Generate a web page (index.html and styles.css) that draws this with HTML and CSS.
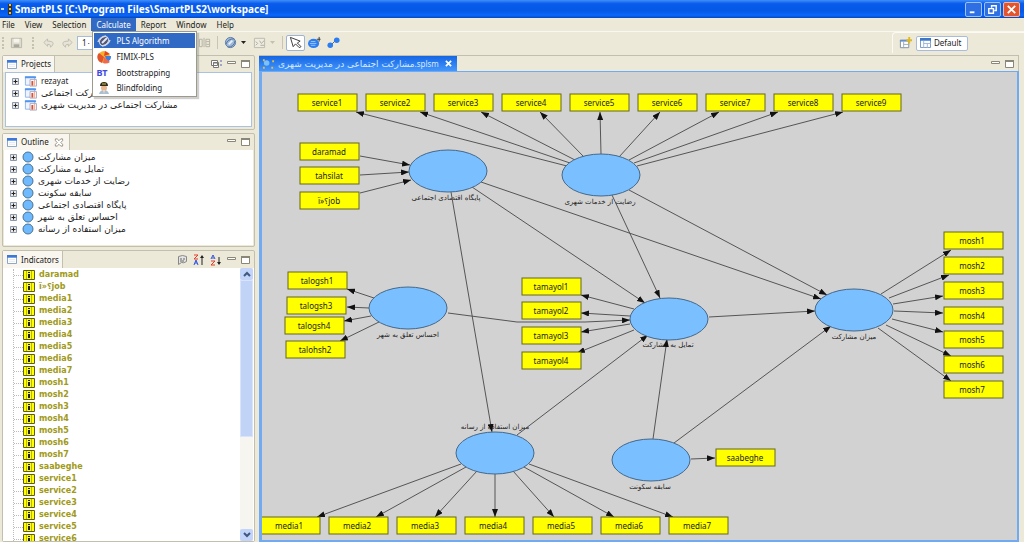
FILE: index.html
```
<!DOCTYPE html>
<html lang="en">
<head>
<meta charset="utf-8">
<title>SmartPLS</title>
<link rel="stylesheet" href="styles.css">
</head>
<body>
<svg class="defs" aria-hidden="true">
  <defs>
    <symbol id="window" viewBox="0 0 11 10"><path d="M.5.5h10v9H.5z" fill="#fff" stroke="#7d9bc4"/><path d="M0 0h11v3H0z" fill="#3c78d8"/><path d="M2 5h7M2 7h7" stroke="#e4e8f0"/></symbol>
    <symbol id="min" viewBox="0 0 9 8"><path d="M.5 1.5h8v2h-8z" fill="#fff" stroke="#8a8778"/></symbol>
    <symbol id="max" viewBox="0 0 9 8"><path d="M.5.5h8v7h-8z" fill="#fff" stroke="#8a8778"/><path d="M0 1h9" stroke="#8a8778" stroke-width="2"/></symbol>
    <symbol id="plus" viewBox="0 0 7 7"><path d="M.5.5h6v6h-6z" fill="#e8e8e8" stroke="#8c98ac"/><path d="M1.500 3.500h4M3.500 1.500v4" stroke="#222"/></symbol>
    <symbol id="project" viewBox="0 0 14 12"><path d="M1.500 1.500h10v9h-10z" fill="#eef4ff" stroke="#8fb2e4"/><path d="M1 1h12v2H1z" fill="#4f94ee"/><path d="M6.500 4.500h7v7h-7z" fill="#fff" stroke="#a8a8c0"/><path d="M8 6h2v5H8z" fill="#e05030"/><path d="M11 5h1v6h-1z" fill="#f0a080"/></symbol>
    <symbol id="latent" viewBox="0 0 12 12"><circle cx="6" cy="6" r="5" fill="#6fb9ff" stroke="#4a7290"/></symbol>
    <symbol id="indicator" viewBox="0 0 12 10"><path d="M.5.5h11v9H.5z" fill="#ff0" stroke="#5c5c20"/><path d="M3.500 1v8M8.500 1v8" stroke="#b8b810"/><path d="M5 2h2v1H5zM5 4h2v4H5z" fill="#222"/></symbol>
  </defs>
</svg>

<header class="titlebar">
  <svg class="logo" viewBox="0 0 12 12"><path d="M0 6h3" stroke="#bcd8ff" stroke-width="2"/><path d="M7 1h4v11H7z" fill="#333"/><path d="M8 1h2v2H8zM8 5h2v2H8zM8 9h2v2H8z" fill="#f4c63a"/></svg>
  <h1>SmartPLS [C:\Program Files\SmartPLS2\workspace]</h1>
  <div class="caption-buttons">
    <button aria-label="Minimize"><svg viewBox="0 0 16 14"><path d="M4 10h5" stroke="#fff" stroke-width="2"/></svg></button>
    <button aria-label="Restore"><svg viewBox="0 0 16 14"><path d="M7 5V3h5v5h-2M4 6h5v5H4z" fill="none" stroke="#fff" stroke-width="1.500"/></svg></button>
    <button class="close" aria-label="Close"><svg viewBox="0 0 16 14"><path d="M4 3l8 8M12 3l-8 8" stroke="#fff" stroke-width="2"/></svg></button>
  </div>
</header>

<nav class="menubar">
  <button>File</button>
  <button>View</button>
  <button>Selection</button>
  <div class="menu-root">
    <button class="open" aria-expanded="true">Calculate</button>
    <div class="dropdown">
      <button class="active"><svg viewBox="0 0 16 14"><ellipse cx="8" cy="7" rx="4" ry="5" transform="rotate(40 8 7)" fill="#557" stroke="#d8e4f4"/><path d="M2 8q2-5 8-6M6 12q6-1 8-6" fill="none" stroke="#cfd8e0" stroke-width="1.500"/><path d="M6 9l5-5" stroke="#dfe8f2" stroke-width="2"/></svg>PLS Algorithm</button>
      <button><svg viewBox="0 0 16 14"><circle cx="8" cy="7" r="6" fill="#f6b02c"/><path d="M8 7L3 3a6 6 0 0 0 3 10z" fill="#e0542c"/><path d="M9 6h6a6 6 0 0 1-4 6z" fill="#3a80e0"/><path d="M8 6l1-5 5 3z" fill="#e34326"/><path d="M8 7l6 5a7 7 0 0 1-7 1z" fill="#ef6a4a"/></svg>FIMIX-PLS</button>
      <button><span class="bt" aria-hidden="true">BT</span>Bootstrapping</button>
      <button><svg viewBox="0 0 16 14"><path d="M3 13q1-4 5-4t5 4z" fill="#a9bfd4"/><circle cx="8" cy="7" r="3" fill="#e8b890"/><path d="M4 5q0-4 4-4t4 4z" fill="#2c2c20"/><path d="M6 3h4" stroke="#e0c030"/><path d="M7 9l1 4 1-4z" fill="#f4d8c8"/></svg>Blindfolding</button>
    </div>
  </div>
  <button>Report</button>
  <button>Window</button>
  <button>Help</button>
</nav>

<div class="toolbar">
  <div class="tools">
    <i class="grip"></i>
    <button class="tool" aria-label="Save"><svg viewBox="0 0 14 14"><path d="M1.500 2.500h11v10h-11z" fill="#dedbcf" stroke="#b8b5a8"/><path d="M4 3h6v4H4z" fill="#f6f4ec"/><path d="M4 9h6v3H4z" fill="#aaa79c"/></svg></button>
    <i class="grip"></i>
    <button class="tool" aria-label="Undo"><svg viewBox="0 0 14 14"><path d="M2 7l4-4v2.500q6 0 6 2.500t-3 4q1-3-3-3v2z" fill="#e6e3d8" stroke="#bfbcae"/></svg></button>
    <button class="tool" aria-label="Redo"><svg viewBox="0 0 14 14"><path d="M12 7L8 3v2.500q-6 0-6 2.500t3 4q-1-3 3-3v2z" fill="#e6e3d8" stroke="#bfbcae"/></svg></button>
    <input class="zoom" type="text" aria-label="Zoom" value="1۰">
    <button class="tool" aria-label="Columns"><svg viewBox="0 0 14 14"><path d="M1.500 3.500h3v8h-3zM8.500 3.500h4v8h-4zM6.500 2v10M9 6h3M9 9h3" fill="none" stroke="#b3b0a2"/></svg></button>
    <i class="rule"></i>
    <button class="tool" aria-label="Calculate"><svg viewBox="0 0 14 14"><circle cx="7" cy="7" r="5.500" fill="#9db8d8" stroke="#5a7ca8"/><path d="M2 9q2-6 9-6M4 12q7 0 8-7" fill="none" stroke="#4f6e98"/><path d="M5 9l4-4" stroke="#e8f0fa" stroke-width="2"/></svg></button>
    <button class="arrow" aria-label="Calculate options"><svg viewBox="0 0 6 4"><path d="M1 0h5L3.500 3z" fill="#222"/></svg></button>
    <button class="tool" aria-label="Report"><svg viewBox="0 0 14 14"><path d="M1.500 2.500h11v10h-11z" fill="#eeebe0" stroke="#bbb8ac"/><path d="M3 6l2 2-2 2M7 5l2 3 3-3M8 10h4" fill="none" stroke="#aaa79a"/></svg></button>
    <button class="arrow" aria-label="Report options"><svg viewBox="0 0 6 4"><path d="M1 0h5L3.500 3z" fill="#c4c1b4"/></svg></button>
    <i class="rule"></i>
    <button class="tool pressed" aria-label="Select"><svg viewBox="0 0 14 14"><path d="M1.500 1.500l3 10 2.500-3 4 4 2-1-4-4 3-2z" fill="#fff" stroke="#333"/></svg></button>
    <button class="tool" aria-label="Latent variable"><svg viewBox="0 0 14 14"><ellipse cx="6" cy="8" rx="6" ry="5" fill="#2c7df0"/><path d="M3 6h5M2 8h7M3 10h5" stroke="#9cc8ff"/><path d="M12 1v5M9.500 3.500h4" stroke="#333"/></svg></button>
    <button class="tool" aria-label="Connection"><svg viewBox="0 0 14 14"><path d="M4 10l6-6" stroke="#555"/><circle cx="3.500" cy="10" r="3" fill="#2c7df0"/><circle cx="10.500" cy="4.500" r="3" fill="#2c7df0"/></svg></button>
  </div>
  <div class="perspectives">
    <button class="tool" aria-label="Open perspective"><svg viewBox="0 0 14 14"><path d="M1.500 3.500h9v8h-9z" fill="#fff" stroke="#7c8ba0"/><path d="M1 3h10v2H1z" fill="#6790c8"/><path d="M5 5v7M5 8h6" stroke="#9ab"/><path d="M11 0v7M8 3.500h6" stroke="#e0b820" stroke-width="2"/></svg></button>
    <button class="perspective"><svg viewBox="0 0 12 11"><path d="M.5.5h11v10H.5z" fill="#fff" stroke="#6e94c4"/><path d="M0 0h12v3H0z" fill="#3c78c8"/><path d="M4 3v8M4 6h8M8 6v5" stroke="#9ab4d4"/></svg>Default</button>
  </div>
</div>

<main class="workbench">
  <aside class="sidebar">
    <section class="view">
      <header class="view-head">
        <h2 class="tab"><svg><use href="#window"/></svg>Projects</h2>
        <div class="view-tools">
          <button aria-label="Collapse all"><svg viewBox="0 0 12 12"><path d="M1.500 2.500h6v5h-6zM3.500 4.500h5v5h-5zM3 5h4" fill="#fff" stroke="#777"/><path d="M11 2v8" stroke="#4a68b0" stroke-dasharray="2"/></svg></button>
          <button aria-label="Minimize"><svg class="box"><use href="#min"/></svg></button>
          <button aria-label="Maximize"><svg class="box"><use href="#max"/></svg></button>
        </div>
      </header>
      <ul class="tree projects">
        <li><svg class="plus"><use href="#plus"/></svg><svg class="project"><use href="#project"/></svg>rezayat</li>
        <li><svg class="plus"><use href="#plus"/></svg><svg class="project"><use href="#project"/></svg><bdi lang="fa">مشارکت اجتماعی</bdi></li>
        <li><svg class="plus"><use href="#plus"/></svg><svg class="project"><use href="#project"/></svg><bdi lang="fa">مشارکت اجتماعی در مدیریت شهری</bdi></li>
      </ul>
    </section>

    <section class="view">
      <header class="view-head">
        <h2 class="tab"><svg><use href="#window"/></svg>Outline<svg class="tab-close" viewBox="0 0 10 10"><path d="M1 1h2l2 2 2-2h2v2L7 5l2 2v2H7L5 7 3 9H1V7l2-2-2-2z" fill="#fff" stroke="#8f8c7e"/></svg></h2>
        <div class="view-tools">
          <button aria-label="Minimize"><svg class="box"><use href="#min"/></svg></button>
          <button aria-label="Maximize"><svg class="box"><use href="#max"/></svg></button>
        </div>
      </header>
      <ul class="tree outline">
        <li><svg class="plus"><use href="#plus"/></svg><svg class="latent"><use href="#latent"/></svg><bdi lang="fa">میزان مشارکت</bdi></li>
        <li><svg class="plus"><use href="#plus"/></svg><svg class="latent"><use href="#latent"/></svg><bdi lang="fa">تمایل به مشارکت</bdi></li>
        <li><svg class="plus"><use href="#plus"/></svg><svg class="latent"><use href="#latent"/></svg><bdi lang="fa">رضایت از خدمات شهری</bdi></li>
        <li><svg class="plus"><use href="#plus"/></svg><svg class="latent"><use href="#latent"/></svg><bdi lang="fa">سابقه سکونت</bdi></li>
        <li><svg class="plus"><use href="#plus"/></svg><svg class="latent"><use href="#latent"/></svg><bdi lang="fa">پایگاه اقتصادی اجتماعی</bdi></li>
        <li><svg class="plus"><use href="#plus"/></svg><svg class="latent"><use href="#latent"/></svg><bdi lang="fa">احساس تعلق به شهر</bdi></li>
        <li><svg class="plus"><use href="#plus"/></svg><svg class="latent"><use href="#latent"/></svg><bdi lang="fa">میزان استفاده از رسانه</bdi></li>
      </ul>
    </section>

    <section class="view">
      <header class="view-head tall">
        <h2 class="tab"><svg><use href="#window"/></svg>Indicators</h2>
        <div class="view-tools">
          <button aria-label="Show values"><svg viewBox="0 0 12 12"><path d="M2.500 2.500q4-2 8 0v5q-3 2-5 1l-3 2z" fill="#e4e4e4" stroke="#888"/><path d="M4 5h2M7 5h2M4 7h4" stroke="#666"/></svg></button>
          <button aria-label="Sort descending"><svg viewBox="0 0 12 12"><path d="M1 1h4L1 5h4" fill="none" stroke="#e43c28"/><path d="M1 11l2-5 2 5M2 9h2" fill="none" stroke="#2c50e0"/><path d="M9 11V3" stroke="#222"/><path d="M7 4l2-3 2 3z" fill="#222"/></svg></button>
          <button aria-label="Sort ascending"><svg viewBox="0 0 12 12"><path d="M1 5l2-4 2 4M2 4h2" fill="none" stroke="#2c50e0"/><path d="M1 7h4l-4 4h4" fill="none" stroke="#e43c28"/><path d="M9 3v7" stroke="#222"/><path d="M7 8l2 3 2-3z" fill="#222"/></svg></button>
          <button aria-label="Minimize"><svg class="box"><use href="#min"/></svg></button>
          <button aria-label="Maximize"><svg class="box"><use href="#max"/></svg></button>
        </div>
      </header>
      <div class="scroller">
        <ul class="tree indicators">
          <li><svg class="indicator"><use href="#indicator"/></svg>daramad</li>
          <li><svg class="indicator"><use href="#indicator"/></svg>ï»؟job</li>
          <li><svg class="indicator"><use href="#indicator"/></svg>media1</li>
          <li><svg class="indicator"><use href="#indicator"/></svg>media2</li>
          <li><svg class="indicator"><use href="#indicator"/></svg>media3</li>
          <li><svg class="indicator"><use href="#indicator"/></svg>media4</li>
          <li><svg class="indicator"><use href="#indicator"/></svg>media5</li>
          <li><svg class="indicator"><use href="#indicator"/></svg>media6</li>
          <li><svg class="indicator"><use href="#indicator"/></svg>media7</li>
          <li><svg class="indicator"><use href="#indicator"/></svg>mosh1</li>
          <li><svg class="indicator"><use href="#indicator"/></svg>mosh2</li>
          <li><svg class="indicator"><use href="#indicator"/></svg>mosh3</li>
          <li><svg class="indicator"><use href="#indicator"/></svg>mosh4</li>
          <li><svg class="indicator"><use href="#indicator"/></svg>mosh5</li>
          <li><svg class="indicator"><use href="#indicator"/></svg>mosh6</li>
          <li><svg class="indicator"><use href="#indicator"/></svg>mosh7</li>
          <li><svg class="indicator"><use href="#indicator"/></svg>saabeghe</li>
          <li><svg class="indicator"><use href="#indicator"/></svg>service1</li>
          <li><svg class="indicator"><use href="#indicator"/></svg>service2</li>
          <li><svg class="indicator"><use href="#indicator"/></svg>service3</li>
          <li><svg class="indicator"><use href="#indicator"/></svg>service4</li>
          <li><svg class="indicator"><use href="#indicator"/></svg>service5</li>
          <li><svg class="indicator"><use href="#indicator"/></svg>service6</li>
        </ul>
        <div class="scrollbar">
          <button aria-label="Scroll up"><svg viewBox="0 0 8 6"><path d="M1 5l3-3 3 3" fill="none" stroke="#40587c" stroke-width="2"/></svg></button>
          <div class="track"><div class="thumb"></div></div>
          <button aria-label="Scroll down"><svg viewBox="0 0 8 6"><path d="M1 1l3 3 3-3" fill="none" stroke="#40587c" stroke-width="2"/></svg></button>
        </div>
      </div>
    </section>
  </aside>

  <section class="editor">
    <header class="editor-head">
      <h2 class="editor-tab">
        <svg class="file" viewBox="0 0 14 12"><circle cx="5" cy="5" r="3" fill="#7cc0ff"/><path d="M1 1h2v2H1zM11 2h2v2h-2zM1 9h2v2H1zM10 9h2v2h-2z" fill="#e0c040"/></svg>
        <span><bdi lang="fa">مشارکت اجتماعی در مدیریت شهری</bdi>.splsm</span>
        <button aria-label="Close"><svg viewBox="0 0 8 8"><path d="M1 1l6 6M7 1L1 7" stroke="#fff" stroke-width="2"/></svg></button>
      </h2>
      <div class="view-tools">
        <button aria-label="Minimize"><svg class="box"><use href="#min"/></svg></button>
        <button aria-label="Maximize"><svg class="box"><use href="#max"/></svg></button>
      </div>
    </header>
    <svg class="canvas" role="img" aria-label="Path model">
      <defs><marker id="tip" viewBox="0 0 8 6" refX="8" refY="3" markerWidth="8" markerHeight="6" markerUnits="userSpaceOnUse" orient="auto"><path d="M0 0l8 3-8 3z" fill="#111"/></marker></defs>
      <g transform="translate(-262 -72)">
        <g class="labels">
          <text x="446" y="200">پایگاه اقتصادی اجتماعی</text>
          <text x="600" y="204">رضایت از خدمات شهری</text>
          <text x="408" y="337">احساس تعلق به شهر</text>
          <text x="668" y="347">تمایل به مشارکت</text>
          <text x="854" y="339">میزان مشارکت</text>
          <text x="495" y="429">میزان استفاده از رسانه</text>
          <text x="650" y="489">سابقه سکونت</text>
        </g>
        <g class="links">
          <path d="M567 166L356 112"/><path d="M570 163L420 112"/><path d="M575 160L481 112"/><path d="M584 157L540 112"/><path d="M601 154L600 112"/><path d="M619 157L660 112"/><path d="M629 160L719 112"/><path d="M634 163L778 112"/><path d="M637 166L843 112"/>
          <path d="M360 156L410 165"/><path d="M360 175L409 172"/><path d="M360 193L411 180"/>
          <path d="M481 182L821 299"/><path d="M472 187L645 303"/><path d="M451 192L492 432"/>
          <path d="M629 190L827 295"/><path d="M612 195L660 298"/>
          <path d="M374 298L347 289"/><path d="M369 308L347 307"/><path d="M371 316L344 321"/><path d="M379 322L340 341"/>
          <path d="M448 313L517 322L585 322L630 320"/>
          <path d="M634 309L581 295"/><path d="M630 316L581 313"/><path d="M630 324L581 332"/><path d="M634 330L577 353"/>
          <path d="M709 317L815 311"/>
          <path d="M881 294L951 250"/><path d="M889 298L949 275"/><path d="M893 304L943 296"/><path d="M894 311L943 313"/><path d="M892 319L943 332"/><path d="M886 325L951 356"/><path d="M878 328L951 381"/>
          <path d="M517 435L648 335"/><path d="M653 439L667 339"/><path d="M674 443L831 326"/><path d="M691 459L715 458"/>
          <path d="M461 464L317 517"/><path d="M466 467L376 517"/><path d="M477 471L435 517"/><path d="M495 474V517"/><path d="M513 471L554 517"/><path d="M524 467L614 517"/><path d="M529 464L673 517"/>
        </g>
        <g class="latents">
          <ellipse cx="448" cy="171" rx="39" ry="21"/><ellipse cx="601" cy="175" rx="39" ry="21"/><ellipse cx="408" cy="308" rx="39" ry="21"/><ellipse cx="669" cy="319" rx="39" ry="21"/><ellipse cx="854" cy="310" rx="39" ry="21"/><ellipse cx="495" cy="453" rx="39" ry="21"/><ellipse cx="651" cy="460" rx="39" ry="21"/>
        </g>
        <g class="boxes">
          <rect x="298" y="94"/><rect x="366" y="94"/><rect x="434" y="94"/><rect x="502" y="94"/><rect x="570" y="94"/><rect x="638" y="94"/><rect x="706" y="94"/><rect x="774" y="94"/><rect x="842" y="94"/>
          <rect x="300" y="143"/><rect x="300" y="167"/><rect x="300" y="192"/>
          <rect x="288" y="272"/><rect x="287" y="297"/><rect x="285" y="317"/><rect x="286" y="341"/>
          <rect x="522" y="278"/><rect x="522" y="302"/><rect x="522" y="327"/><rect x="522" y="352"/>
          <rect x="944" y="232"/><rect x="944" y="257"/><rect x="944" y="282"/><rect x="944" y="307"/><rect x="944" y="331"/><rect x="944" y="356"/><rect x="944" y="381"/>
          <rect x="716" y="449"/>
          <rect x="261" y="517"/><rect x="329" y="517"/><rect x="397" y="517"/><rect x="465" y="517"/><rect x="533" y="517"/><rect x="601" y="517"/><rect x="669" y="517"/>
        </g>
        <g class="names">
          <text x="327" y="106">service1</text><text x="395" y="106">service2</text><text x="463" y="106">service3</text><text x="531" y="106">service4</text><text x="599" y="106">service5</text><text x="667" y="106">service6</text><text x="735" y="106">service7</text><text x="803" y="106">service8</text><text x="871" y="106">service9</text>
          <text x="329" y="155">daramad</text><text x="329" y="179">tahsilat</text><text x="329" y="204">ï»؟job</text>
          <text x="317" y="284">talogsh1</text><text x="316" y="309">talogsh3</text><text x="314" y="329">talogsh4</text><text x="315" y="353">talohsh2</text>
          <text x="551" y="290">tamayol1</text><text x="551" y="314">tamayol2</text><text x="551" y="339">tamayol3</text><text x="551" y="364">tamayol4</text>
          <text x="972" y="244">mosh1</text><text x="972" y="269">mosh2</text><text x="972" y="294">mosh3</text><text x="972" y="319">mosh4</text><text x="972" y="343">mosh5</text><text x="972" y="368">mosh6</text><text x="972" y="393">mosh7</text>
          <text x="745" y="461">saabeghe</text>
          <text x="289" y="529">media1</text><text x="357" y="529">media2</text><text x="425" y="529">media3</text><text x="493" y="529">media4</text><text x="561" y="529">media5</text><text x="629" y="529">media6</text><text x="697" y="529">media7</text>
        </g>
      </g>
    </svg>
  </section>
</main>
</body>
</html>
```

FILE: styles.css
```
* { box-sizing: border-box; }

body {
  margin: 0;
  height: 100vh;
  display: flex;
  flex-direction: column;
  overflow: hidden;
  background: #ece9d8;
  color: #222;
  font: 8px/12px "Noto Sans", "DejaVu Sans", sans-serif;
}

h1, h2, ul { margin: 0; padding: 0; font-size: 8px; font-weight: normal; }
button {
  margin: 0;
  padding: 0;
  border: 0;
  background: none;
  color: inherit;
  font: inherit;
  display: flex;
  align-items: center;
}
svg { display: block; flex: none; }
.defs { position: absolute; width: 0; height: 0; }
bdi { font-family: "DejaVu Sans", sans-serif; font-size: 9px; }

/* title bar */
.titlebar {
  height: 18px;
  flex: none;
  display: flex;
  align-items: center;
  gap: 2px;
  padding: 0 4px 0 1px;
  background: linear-gradient(#3f8ff8 0, #0a5cec 20%, #0458e6 60%, #0a66fa 85%, #0446c0 100%);
  color: #fff;
}
.titlebar h1 { flex: 1; font: bold 10px/16px "Noto Sans", sans-serif; }
.logo { width: 12px; height: 12px; }
.caption-buttons { display: flex; gap: 2px; }
.caption-buttons button {
  width: 17px;
  height: 15px;
  border: 1px solid #9cc0f8;
  border-radius: 2px;
  background: #2f6fe4;
}
.caption-buttons svg { width: 15px; height: 13px; }
.caption-buttons .close { background: #e2552f; border-color: #f0b8a4; }

/* menu bar */
.menubar {
  height: 14px;
  flex: none;
  display: flex;
  border-bottom: 1px solid #f8f7f0;
}
.menubar > button, .menu-root > button { height: 13px; padding: 0 5px; }
.menubar > button:first-child { padding-left: 2px; }
.menubar > button:nth-of-type(n+4) { padding: 0 5px; }
.menu-root { position: relative; }
.menu-root > .open { background: #316ac5; color: #fff; }
.dropdown {
  position: absolute;
  z-index: 5;
  top: 13px;
  left: 1px;
  width: 105px;
  padding: 1px;
  background: #fff;
  border: 1px solid #9d9a8c;
  box-shadow: 2px 2px 1px #8886;
}
.dropdown button { width: 100%; height: 15px; gap: 4px; padding-left: 2px; }
.dropdown button:nth-child(2) { height: 17px; }
.dropdown .active { background: #316ac5; color: #fff; }
.dropdown svg, .bt { width: 16px; height: 14px; }
.bt { font: bold 9px/14px "Noto Sans", sans-serif; color: #4048e0; text-align: left; }

/* tool bar */
.toolbar { height: 21px; flex: none; display: flex; justify-content: space-between; }
.tools { display: flex; align-items: center; }
.tool { width: 19px; height: 16px; justify-content: center; }
.tool svg { width: 13px; height: 13px; }
.tool.pressed { background: #fff; border: 1px solid #9db4d4; border-radius: 2px; }
.arrow { width: 10px; height: 16px; }
.arrow svg { width: 6px; height: 4px; }
.grip { width: 2px; height: 12px; margin: 0 3px 0 2px; border-left: 2px dotted #c6c2b0; }
.grip:nth-of-type(2) { margin: 0 5px 0 6px; }
.rule { width: 1px; height: 13px; margin: 0 3px; background: #c9c5b2; }
.zoom {
  width: 118px;
  height: 14px;
  padding: 0 4px;
  border: 1px solid #a8bcd8;
  background: #fff;
  font: inherit;
  color: inherit;
}
.perspectives {
  width: 132px;
  display: flex;
  align-items: center;
  gap: 1px;
  padding-left: 3px;
  border-left: 1px solid #fbfaf5;
  border-top: 1px solid #fbfaf5;
  border-top-left-radius: 4px;
}
.perspective {
  height: 15px;
  gap: 3px;
  padding: 0 5px 0 3px;
  border: 1px solid #a9bcdc;
  border-radius: 2px;
  background: #fff;
}
.perspective svg { width: 11px; height: 10px; }

/* workbench */
.workbench {
  flex: 1;
  min-height: 0;
  display: grid;
  grid-template-columns: 1fr 3fr;
  padding-top: 2px;
}
.sidebar {
  min-height: 0;
  display: grid;
  grid-template-rows: 75fr 114fr 292fr;
  gap: 3px;
  padding: 0 1px 0 2px;
}
.view {
  min-height: 0;
  display: flex;
  flex-direction: column;
  border: 1px solid #c3bfae;
  border-radius: 2px;
  background: #ece9d8;
}
.view-head { height: 16px; flex: none; display: flex; justify-content: space-between; }
.view-head.tall { height: 17px; }
.tab {
  display: flex;
  align-items: center;
  gap: 4px;
  padding: 0 3px 0 4px;
  border-right: 1px solid #c3bfae;
  background: #f8f6ee;
}
.tab svg { width: 10px; height: 9px; }
.tab .tab-close { margin: 0 2px 0 1px; }
.view-tools { display: flex; align-items: center; gap: 5px; padding-right: 4px; }
.view-tools svg { width: 12px; height: 12px; }
.view-tools .box { width: 9px; height: 8px; }

.tree {
  flex: 1;
  min-height: 0;
  overflow: hidden;
  list-style: none;
  background: #fff;
  margin: 0 1px 1px;
}
.tree li { display: flex; align-items: center; height: 12px; white-space: nowrap; }
.projects { margin: 0 2px 2px; padding: 2px 0 0 6px; border: 1px solid #a9c2e2; }
.outline { padding: 1px 0 0 6px; }
.plus { width: 7px; height: 7px; margin-right: 5px; }
.project { width: 13px; height: 12px; margin-right: 4px; }
.latent { width: 12px; height: 12px; margin-right: 4px; }

.scroller { flex: 1; min-height: 0; display: flex; background: #fff; }
.indicators {
  margin: 1px 0 0 10px;
  border-left: 1px dotted #bbb;
  color: #a09a18;
  font-family: "DejaVu Sans", sans-serif;
  font-weight: bold;
}
.indicators li::before { content: ""; width: 9px; border-top: 1px dotted #bbb; }
.indicator { width: 12px; height: 10px; margin-right: 4px; }
.scrollbar { width: 13px; margin-right: 1px; display: flex; flex-direction: column; background: #f6f5f0; }
.scrollbar button { height: 12px; justify-content: center; border-radius: 2px; background: #c2d4fa; }
.scrollbar svg { width: 8px; height: 6px; }
.track { flex: 1; }
.thumb { height: 63%; border: 1px solid #d9e4fc; background: #c2d3f8; }

/* editor */
.editor { min-width: 0; min-height: 0; display: flex; flex-direction: column; padding: 0 5px 0 3px; }
.editor-head {
  height: 16px;
  flex: none;
  display: flex;
  justify-content: space-between;
  border-top: 1px solid #c3bfae;
  border-right: 1px solid #c3bfae;
}
.editor-tab {
  display: flex;
  align-items: center;
  gap: 3px;
  padding: 0 5px 0 3px;
  background: linear-gradient(#1566e4, #4496fc);
  color: #d6e8ff;
  white-space: nowrap;
}
.editor-tab .file { width: 13px; height: 12px; }
.editor-tab button { margin-left: 3px; }
.editor-tab button svg { width: 7px; height: 7px; }
.canvas {
  flex: 1;
  width: 100%;
  min-height: 0;
  border: solid #70aaf2;
  border-width: 1px 2px 2px 3px;
  background: #d2d2d2;
}
.boxes rect { width: 59px; height: 17px; fill: #ff0; stroke: #66661c; }
.latents ellipse { fill: #7abfff; stroke: #44688a; }
.links path { fill: none; stroke: #555; marker-end: url(#tip); }
.names text { text-anchor: middle; fill: #222; }
.labels text { text-anchor: middle; fill: #222; font-family: "DejaVu Sans", sans-serif; font-size: 7px; }
```
